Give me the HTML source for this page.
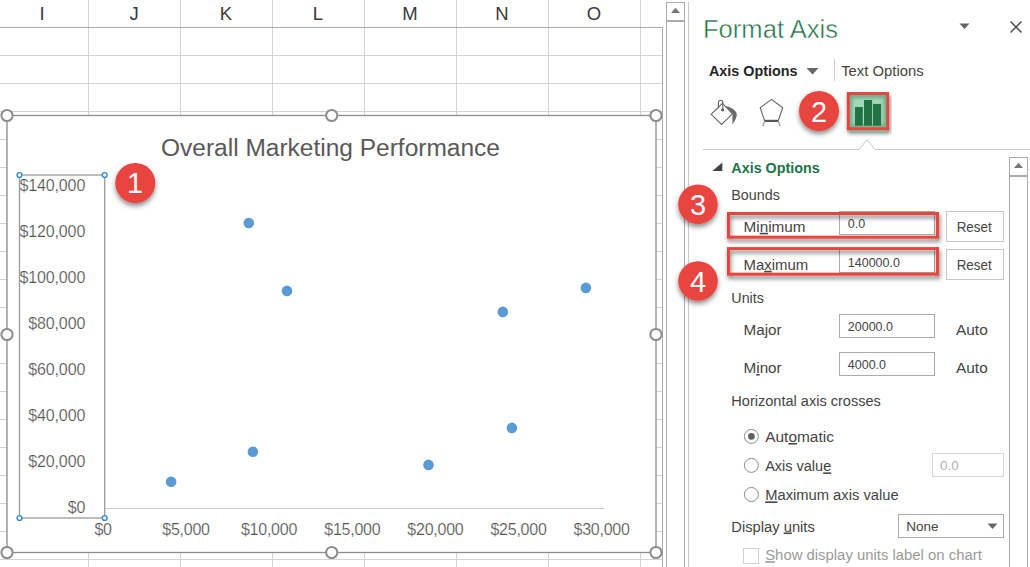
<!DOCTYPE html>
<html>
<head>
<meta charset="utf-8">
<title>Format Axis</title>
<style>
html,body{margin:0;padding:0;background:#fff;}
body{width:1030px;height:567px;overflow:hidden;position:relative;font-family:"Liberation Sans",sans-serif;}
svg{position:absolute;left:0;top:0;display:block;}
text{font-family:"Liberation Sans",sans-serif;}
.hdr{font-size:18.5px;fill:#3b3b3b;text-anchor:middle;}
.ax{font-size:16px;fill:#555;letter-spacing:-0.25px;stroke:#fff;stroke-width:0.18px;}
.ay{letter-spacing:-0.12px;}
.ui{font-size:15.5px;fill:#444;}
.val{font-size:12.5px;fill:#444;}
.num{font-size:29px;fill:#fff;text-anchor:middle;}
</style>
</head>
<body>
<svg width="1030" height="567" viewBox="0 0 1030 567">
<defs>
<filter id="sh" x="-30%" y="-30%" width="160%" height="170%">
<feDropShadow dx="0" dy="3" stdDeviation="2.5" flood-color="#000" flood-opacity="0.45"/>
</filter>
<filter id="sh2" x="-10%" y="-30%" width="120%" height="180%">
<feDropShadow dx="1" dy="3" stdDeviation="2" flood-color="#000" flood-opacity="0.55"/>
</filter>
<linearGradient id="gg" x1="0" y1="0" x2="0" y2="1">
<stop offset="0" stop-color="#7fb294"/><stop offset="0.25" stop-color="#9bd3b0"/><stop offset="1" stop-color="#9bd3b0"/>
</linearGradient>
<filter id="bl" x="-20%" y="-20%" width="140%" height="140%"><feGaussianBlur stdDeviation="1.6"/></filter>
</defs>

<!-- ===== sheet grid ===== -->
<g id="grid" stroke="#d4d4d4" stroke-width="1" shape-rendering="crispEdges">
<path d="M88.5 0V567M180.5 0V567M272.5 0V567M364.5 0V567M456.5 0V567M548.5 0V567M640.5 0V567"/>
<path d="M0 55.5H663M0 83.5H663M0 111.5H663M0 139.5H663M0 167.5H663M0 195.5H663M0 223.5H663M0 251.5H663M0 279.5H663M0 307.5H663M0 335.5H663M0 363.5H663M0 391.5H663M0 419.5H663M0 447.5H663M0 475.5H663M0 503.5H663M0 531.5H663M0 559.5H663"/>
</g>
<g stroke="#ababab" stroke-width="1" shape-rendering="crispEdges" fill="none">
<path d="M0 27.5H663M662.5 27V567"/>
</g>
<g class="hdr">
<text x="42" y="20">I</text><text x="134" y="20">J</text><text x="226" y="20">K</text><text x="318" y="20">L</text><text x="410" y="20">M</text><text x="502" y="20">N</text><text x="594" y="20">O</text>
</g>

<!-- sheet scrollbar -->
<g stroke="#ababab" stroke-width="1" fill="#fff" shape-rendering="crispEdges">
<rect x="666.5" y="2.5" width="18" height="570"/>
<path d="M666 20.5H685" stroke-width="2"/>
</g>
<path d="M671 13L675.5 7.8L680 13Z" fill="#777"/>
<path d="M688.5 2V567" stroke="#c8c8c8" stroke-width="1" shape-rendering="crispEdges"/>

<!-- ===== chart ===== -->
<rect x="7" y="115.5" width="649" height="437" fill="#fff" stroke="#8c8c8c" stroke-width="1.3"/>
<text x="330.5" y="156" text-anchor="middle" font-size="23px" fill="#595959" textLength="339" lengthAdjust="spacingAndGlyphs">Overall Marketing Performance</text>
<path d="M104.5 508.5H603.5" stroke="#c9c9c9" stroke-width="1" shape-rendering="crispEdges"/>
<g class="ax ay" text-anchor="end">
<text x="85.2" y="191.3">$140,000</text>
<text x="85.2" y="237.3">$120,000</text>
<text x="85.2" y="283.3">$100,000</text>
<text x="85.2" y="329.3">$80,000</text>
<text x="85.2" y="375.3">$60,000</text>
<text x="85.2" y="421.3">$40,000</text>
<text x="85.2" y="467.3">$20,000</text>
<text x="85.2" y="513.3">$0</text>
</g>
<g class="ax" text-anchor="middle">
<text x="103.1" y="535.2">$0</text>
<text x="186" y="535.2">$5,000</text>
<text x="269" y="535.2">$10,000</text>
<text x="352.3" y="535.2">$15,000</text>
<text x="435.4" y="535.2">$20,000</text>
<text x="518.5" y="535.2">$25,000</text>
<text x="601.6" y="535.2">$30,000</text>
</g>
<g fill="#5b9bd5">
<circle cx="171.1" cy="481.8" r="5.3"/>
<circle cx="252.9" cy="451.8" r="5.3"/>
<circle cx="248.8" cy="223" r="5.3"/>
<circle cx="287" cy="290.9" r="5.3"/>
<circle cx="428.5" cy="464.9" r="5.3"/>
<circle cx="511.9" cy="427.9" r="5.3"/>
<circle cx="502.8" cy="311.9" r="5.3"/>
<circle cx="585.9" cy="287.9" r="5.3"/>
</g>
<!-- axis selection box -->
<rect x="19.5" y="175" width="85.2" height="343" fill="none" stroke="#9a9a9a" stroke-width="1.3"/>
<g fill="#fff" stroke="#2f8ae0" stroke-width="1.4">
<circle cx="19.5" cy="175" r="2.4"/><circle cx="104.7" cy="175" r="2.4"/><circle cx="19.5" cy="518" r="2.4"/><circle cx="104.7" cy="518" r="2.4"/>
</g>
<!-- chart handles -->
<g fill="#fff" stroke="#8c8c8c" stroke-width="2">
<circle cx="7" cy="115.5" r="5.6"/><circle cx="331.7" cy="115.5" r="5.6"/><circle cx="656" cy="115.5" r="5.6"/>
<circle cx="7" cy="334.5" r="5.6"/><circle cx="656" cy="334.5" r="5.6"/>
<circle cx="7" cy="552.5" r="5.6"/><circle cx="331.7" cy="552.5" r="5.6"/><circle cx="656" cy="552.5" r="5.6"/>
</g>

<!-- ===== format pane ===== -->
<text x="703" y="38" font-size="25px" fill="#217346" stroke="#fff" stroke-width="0.45" textLength="135" lengthAdjust="spacingAndGlyphs">Format Axis</text>
<path d="M959.5 23.5H969.5L964.5 29Z" fill="#666"/>
<path d="M1010.5 21.5L1021.5 32.5M1021.5 21.5L1010.5 32.5" stroke="#444" stroke-width="1.4" fill="none"/>
<text x="709" y="76" font-size="15px" font-weight="bold" fill="#262626" textLength="88.5" lengthAdjust="spacingAndGlyphs">Axis Options</text>
<path d="M806.5 68H818.5L812.5 74.5Z" fill="#666"/>
<path d="M834.5 59V81" stroke="#d0d0d0" stroke-width="1" shape-rendering="crispEdges"/>
<text class="ui" x="841.2" y="76" textLength="82.5" lengthAdjust="spacingAndGlyphs">Text Options</text>

<!-- paint bucket -->
<g fill="none" stroke="#666" stroke-width="1.1" stroke-linejoin="miter">
<path d="M722.5 103.4L732.5 113.8L721.6 124.5L711.2 114.3Z"/>
<path d="M718.4 107.5V102.4A2.2 2.2 0 0 1 722.8 102.4V109.2"/>
</g>
<circle cx="722.6" cy="109.8" r="1.6" fill="#606060"/>
<path d="M725.4 106C731 107 736 110 736.8 114C737 118 734.5 121 732.4 124.5L732.5 113.8Z" fill="#6b6b6b"/>
<!-- pentagon -->
<path d="M771.6 99.4L782.7 107.7L778.2 120.9H764.6L760.2 107.7Z" fill="none" stroke="#666" stroke-width="1.1"/>
<path d="M764.6 120.9H778.2" stroke="#5a5a5a" stroke-width="2.2"/>
<path d="M764.6 121L762.8 126.3M778.2 121L780 126.3" stroke="#9a9a9a" stroke-width="1.2"/>

<!-- selected icon -->
<rect x="848.2" y="93.5" width="39.6" height="35.4" fill="#79ad8f" stroke="#e8453f" stroke-width="2.6" filter="url(#sh2)"/>
<rect x="852.5" y="98.5" width="31" height="26" fill="#a2d9b7" filter="url(#bl)"/>
<rect x="848.2" y="93.5" width="39.6" height="35.4" fill="none" stroke="#e8453f" stroke-width="2.6"/>
<rect x="849" y="130.2" width="38" height="1.8" fill="#86bd9d" opacity="0.85"/>
<g fill="#217346">
<rect x="855" y="107" width="7.8" height="18.7"/><rect x="864" y="100" width="8.1" height="25.7"/><rect x="873" y="103.9" width="8.1" height="21.8"/>
</g>
<path d="M703 149.5H859L867 139.8L875 149.5H1030" fill="none" stroke="#c6c6c6" stroke-width="1"/>

<!-- section -->
<path d="M722.3 162.5V171H712.4Z" fill="#444"/>
<text x="731.3" y="173" font-size="15px" font-weight="bold" fill="#217346" textLength="88.5" lengthAdjust="spacingAndGlyphs">Axis Options</text>
<text class="ui" x="731.3" y="200.2" textLength="48.5" lengthAdjust="spacingAndGlyphs">Bounds</text>

<!-- min row -->
<rect x="839.5" y="211.5" width="95" height="23" fill="#fff" stroke="#ababab" stroke-width="1" shape-rendering="crispEdges"/>
<rect x="728.5" y="213.5" width="209" height="23.7" fill="none" stroke="#e8453f" stroke-width="3" filter="url(#sh2)"/>
<text class="ui" x="743.5" y="231.8" textLength="62" lengthAdjust="spacingAndGlyphs">Mi<tspan text-decoration="underline">n</tspan>imum</text>
<text class="val" x="847.8" y="228">0.0</text>
<rect x="946.5" y="211.5" width="57" height="30" fill="#fff" stroke="#c6c6c6" stroke-width="1" shape-rendering="crispEdges"/>
<text class="ui" x="956.7" y="231.8" textLength="35" lengthAdjust="spacingAndGlyphs">Reset</text>

<!-- max row -->
<rect x="839.5" y="249.5" width="95" height="23" fill="#fff" stroke="#ababab" stroke-width="1" shape-rendering="crispEdges"/>
<rect x="728.5" y="248.6" width="209" height="25.6" fill="none" stroke="#e8453f" stroke-width="3" filter="url(#sh2)"/>
<text class="ui" x="743.5" y="269.8" textLength="64.7" lengthAdjust="spacingAndGlyphs">Ma<tspan text-decoration="underline">x</tspan>imum</text>
<text class="val" x="847.8" y="266.5">140000.0</text>
<rect x="946.5" y="249.5" width="57" height="30" fill="#fff" stroke="#c6c6c6" stroke-width="1" shape-rendering="crispEdges"/>
<text class="ui" x="956.7" y="269.8" textLength="35" lengthAdjust="spacingAndGlyphs">Reset</text>

<text class="ui" x="731.3" y="303.1" textLength="32.6" lengthAdjust="spacingAndGlyphs">Units</text>
<text class="ui" x="743.5" y="334.5" textLength="38.2" lengthAdjust="spacingAndGlyphs">Ma<tspan text-decoration="underline">j</tspan>or</text>
<rect x="839.5" y="314.5" width="95" height="23" fill="#fff" stroke="#ababab" stroke-width="1" shape-rendering="crispEdges"/>
<text class="val" x="847.8" y="331">20000.0</text>
<text class="ui" x="956" y="334.5" textLength="31.7" lengthAdjust="spacingAndGlyphs">Auto</text>
<text class="ui" x="743.5" y="373" textLength="38.2" lengthAdjust="spacingAndGlyphs">M<tspan text-decoration="underline">i</tspan>nor</text>
<rect x="839.5" y="352.5" width="95" height="23" fill="#fff" stroke="#ababab" stroke-width="1" shape-rendering="crispEdges"/>
<text class="val" x="847.8" y="369">4000.0</text>
<text class="ui" x="956" y="373" textLength="31.7" lengthAdjust="spacingAndGlyphs">Auto</text>

<text class="ui" x="731.3" y="406" textLength="149.5" lengthAdjust="spacingAndGlyphs">Horizontal axis crosses</text>

<g fill="#fff" stroke="#8a8a8a" stroke-width="1">
<circle cx="751.4" cy="436.4" r="7"/><circle cx="751.4" cy="465.4" r="7"/><circle cx="751.4" cy="494.5" r="7"/>
</g>
<circle cx="751.4" cy="436.4" r="3.3" fill="#606060"/>
<text class="ui" x="765.2" y="442" textLength="68.7" lengthAdjust="spacingAndGlyphs">Aut<tspan text-decoration="underline">o</tspan>matic</text>
<text class="ui" x="765.2" y="471.4" textLength="66" lengthAdjust="spacingAndGlyphs">Axis valu<tspan text-decoration="underline">e</tspan></text>
<text class="ui" x="765.2" y="500.4" textLength="133.4" lengthAdjust="spacingAndGlyphs"><tspan text-decoration="underline">M</tspan>aximum axis value</text>
<rect x="932.5" y="453.5" width="71" height="23" fill="#fff" stroke="#d6d6d6" stroke-width="1" shape-rendering="crispEdges"/>
<text x="940" y="469.8" font-size="13.5px" fill="#b0b0b0">0.0</text>

<text class="ui" x="731.3" y="531.5" textLength="83.5" lengthAdjust="spacingAndGlyphs">Display <tspan text-decoration="underline">u</tspan>nits</text>
<rect x="898.5" y="514.5" width="105" height="23" fill="#fff" stroke="#ababab" stroke-width="1" shape-rendering="crispEdges"/>
<text x="906.2" y="531" font-size="13.5px" fill="#444">None</text>
<path d="M987.5 523.5H997.5L992.5 529Z" fill="#666"/>
<rect x="743.5" y="548.5" width="14.5" height="14.5" fill="#fff" stroke="#d0d0d0" stroke-width="1" shape-rendering="crispEdges"/>
<text x="765.2" y="560.2" font-size="15.5px" fill="#9a9a9a" textLength="216.6" lengthAdjust="spacingAndGlyphs"><tspan text-decoration="underline">S</tspan>how display units label on chart</text>

<!-- pane scrollbar -->
<g stroke="#ababab" stroke-width="1" fill="#fff" shape-rendering="crispEdges">
<rect x="1009.5" y="157.5" width="18" height="420"/>
<path d="M1009 175.5H1028" stroke-width="2"/>
</g>
<path d="M1014 168L1018.5 162.8L1023 168Z" fill="#777"/>

<!-- numbered badges -->
<g filter="url(#sh)">
<circle cx="135.3" cy="183" r="20" fill="#e8453f"/>
<circle cx="819" cy="111" r="20" fill="#e8453f"/>
<circle cx="698" cy="204.3" r="19.8" fill="#e8453f"/>
<circle cx="698" cy="281" r="19.8" fill="#e8453f"/>
</g>
<g class="num">
<text x="135" y="193">1</text>
<text x="819" y="121.8">2</text>
<text x="698" y="215">3</text>
<text x="698" y="291.7">4</text>
</g>
</svg>
</body>
</html>
